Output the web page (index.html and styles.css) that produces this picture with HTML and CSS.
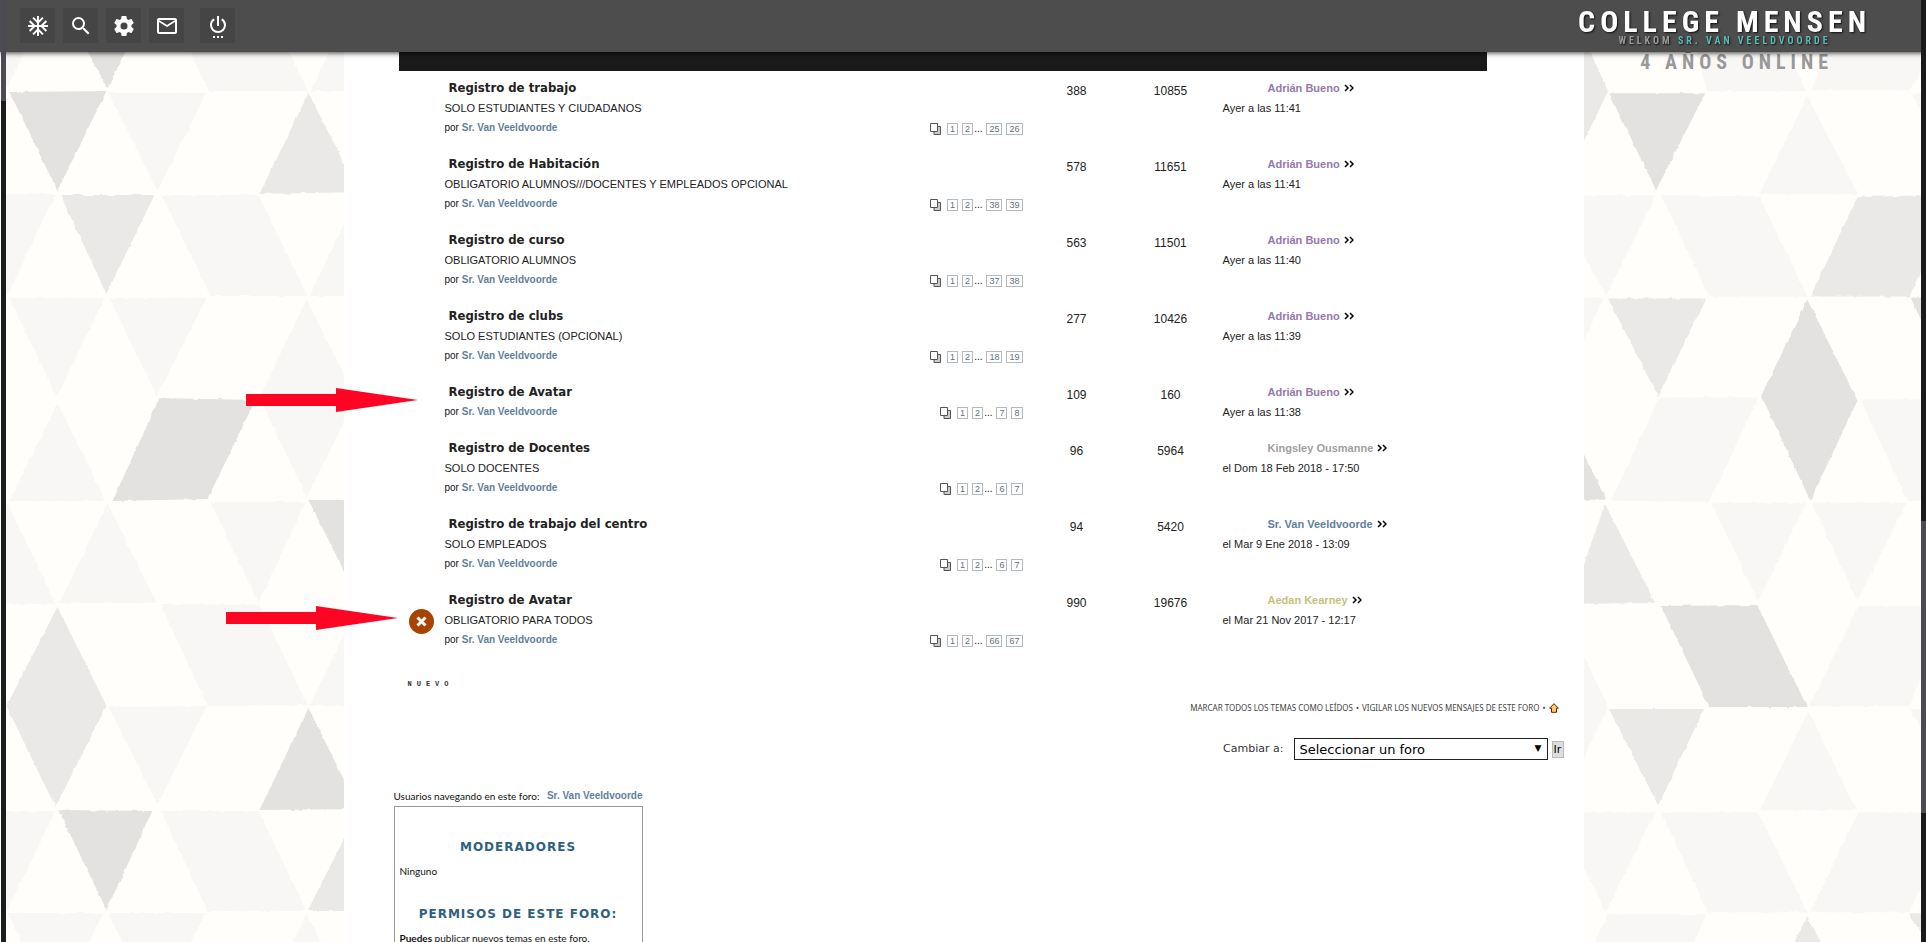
FILE: index.html
```html
<!DOCTYPE html>
<html lang="es">
<head>
<meta charset="utf-8">
<title>College Mensen</title>
<link rel="stylesheet" href="styles.css">
</head>
<body>
<header class="topbar">
  <nav class="tools" aria-label="Herramientas">
    <button class="tool" aria-label="Inicio"><svg viewBox="0 0 24 24"><path d="M22 11h-4.17l3.24-3.24-1.41-1.42L15 11h-2V9l4.66-4.66-1.42-1.41L13 6.17V2h-2v4.17L7.76 2.93 6.34 4.34 11 9v2H9L4.34 6.34 2.93 7.76 6.17 11H2v2h4.17l-3.24 3.24 1.41 1.42L9 13h2v2l-4.66 4.66 1.42 1.41L11 17.83V22h2v-4.17l3.24 3.24 1.42-1.41L13 15v-2h2l4.66 4.66 1.41-1.42L17.83 13H22z"/></svg></button>
    <button class="tool" aria-label="Buscar"><svg viewBox="0 0 24 24"><path d="M15.5 14h-.79l-.28-.27A6.47 6.47 0 0 0 16 9.500 6.500 6.500 0 1 0 9.500 16c1.610 0 3.090-.59 4.230-1.570l.27.28v.79l5 4.990L20.490 19l-4.990-5zm-6 0C7.010 14 5 11.990 5 9.500S7.010 5 9.500 5 14 7.010 14 9.500 11.990 14 9.500 14z"/></svg></button>
    <button class="tool" aria-label="Ajustes"><svg viewBox="0 0 24 24"><path d="M19.430 12.980c.04-.32.07-.64.07-.98s-.03-.66-.07-.98l2.110-1.650c.19-.15.24-.42.12-.64l-2-3.460c-.12-.22-.39-.3-.61-.22l-2.490 1c-.52-.4-1.080-.73-1.690-.98l-.38-2.650A.49.49 0 0 0 14 2h-4c-.25 0-.46.18-.49.42l-.38 2.650c-.61.25-1.170.59-1.690.98l-2.490-1c-.23-.09-.49 0-.61.22l-2 3.460c-.13.22-.07.49.12.64l2.110 1.650c-.04.32-.07.65-.07.98s.03.66.07.98l-2.110 1.650c-.19.15-.24.42-.12.64l2 3.460c.12.22.39.3.61.22l2.490-1c.52.4 1.080.73 1.690.98l.38 2.650c.03.24.24.42.49.42h4c.25 0 .46-.18.49-.42l.38-2.650c.61-.25 1.170-.59 1.690-.98l2.490 1c.23.09.49 0 .61-.22l2-3.460c.12-.22.07-.49-.12-.64l-2.110-1.650zM12 15.500a3.500 3.500 0 1 1 0-7 3.500 3.500 0 0 1 0 7z"/></svg></button>
    <button class="tool" aria-label="Mensajes"><svg viewBox="0 0 24 24"><path d="M20 4H4c-1.100 0-2 .9-2 2v12c0 1.100.9 2 2 2h16c1.100 0 2-.9 2-2V6c0-1.100-.9-2-2-2zm0 14H4V8l8 5 8-5v10zm-8-7L4 6h16l-8 5z"/></svg></button>
    <button class="tool tool-power" aria-label="Salir"><svg viewBox="0 0 24 24"><path d="M7 24h2v-2H7v2zm4 0h2v-2h-2v2zm2-22h-2v10h2V2zm3.560 2.440-1.450 1.450A5.970 5.970 0 0 1 18 11a6 6 0 1 1-9.120-5.120L7.440 4.440A7.960 7.960 0 0 0 4 11a8 8 0 1 0 16 0c0-2.720-1.360-5.120-3.440-6.560zM15 24h2v-2h-2v2z"/></svg></button>
  </nav>
  <div class="brand">
    <div class="brand-name">COLLEGE MENSEN</div>
    <div class="brand-sub">WELKOM <a href="#">SR. VAN VEELDVOORDE</a></div>
  </div>
</header>

<div class="shell">
  <div class="side">
    <svg class="tiles" viewBox="6 0 338 942" preserveAspectRatio="xMaxYMin slice" aria-hidden="true">
      <defs><filter id="paper" x="-5%" y="-5%" width="110%" height="110%"><feTurbulence type="fractalNoise" baseFrequency="0.12" numOctaves="3" seed="4"/><feDisplacementMap in="SourceGraphic" scale="3" xChannelSelector="R" yChannelSelector="G"/></filter></defs>
      <g filter="url(#paper)">
        <g class="light"><path d="M0 40H31L6 91H0zM185 40H284L308 91H209zM335 40H400V91H311zM109 93H207L158 191zM0 194H56L8 295L0 290zM162 195H259L308 296H211zM358 196L310 296H400zM10 298H105L57 397zM110 298H207L157 396zM307 299L356 398L307 497L260 398zM58 403L106 501H10zM8 503L56 604H0V510zM108 503L157 603H60zM211 502H306L259 603zM161 604L260 605L308 705L208 706zM358 606L310 706H400zM109 707L207 706L158 805zM0 811H56L8 910L0 905zM161 811H259L307 911H208zM8 913H104L56 1010zM108 913H206L158 1010zM307 914L356 1010H260z"/></g>
        <g class="mid"><path d="M309 93L260 194L359 192zM61 195H155L107 294zM58 607L107 706L56 807L7 706zM358 812L308 911H400z"/></g>
        <g class="dark"><path d="M82 40H132L108 88zM10 92L107 91L58 191zM160 398L256 400L208 499L113 501zM309 500H400L359 600zM309 708L359 809L260 810zM59 810L153 811L107 910z"/></g>
      </g>
    </svg>
  </div>

  <main class="page">
    <div class="forum">
      <div class="forum-bar"></div>
      <table class="topics">
        <colgroup><col class="c-icon"><col><col class="c-num"><col class="c-num"><col class="c-last"></colgroup>
        <tbody>
        <tr><td class="state"></td><td class="topic"><a class="title" href="#">Registro de trabajo</a><p class="desc">SOLO ESTUDIANTES Y CIUDADANOS</p><div class="meta"><span>por <a class="author" href="#">Sr. Van Veeldvoorde</a></span><span class="pages"><svg class="copy" viewBox="0 0 11 12"><path class="back" d="M4 3.500H10.500V11.500H4z"/><path class="front" d="M.5.500H7.500V8.500H.5z"/></svg><a href="#">1</a><a href="#">2</a><i>...</i><a href="#">25</a><a href="#">26</a></span></div></td><td class="num">388</td><td class="num">10855</td><td class="last"><a class="who violet" href="#">Adrián Bueno</a><svg class="go" viewBox="0 0 10 8"><path d="M1 1l3 3-3 3M6 1l3 3-3 3"/></svg><p>Ayer a las 11:41</p></td></tr>
        <tr><td class="state"></td><td class="topic"><a class="title" href="#">Registro de Habitación</a><p class="desc">OBLIGATORIO ALUMNOS///DOCENTES Y EMPLEADOS OPCIONAL</p><div class="meta"><span>por <a class="author" href="#">Sr. Van Veeldvoorde</a></span><span class="pages"><svg class="copy" viewBox="0 0 11 12"><path class="back" d="M4 3.500H10.500V11.500H4z"/><path class="front" d="M.5.500H7.500V8.500H.5z"/></svg><a href="#">1</a><a href="#">2</a><i>...</i><a href="#">38</a><a href="#">39</a></span></div></td><td class="num">578</td><td class="num">11651</td><td class="last"><a class="who violet" href="#">Adrián Bueno</a><svg class="go" viewBox="0 0 10 8"><path d="M1 1l3 3-3 3M6 1l3 3-3 3"/></svg><p>Ayer a las 11:41</p></td></tr>
        <tr><td class="state"></td><td class="topic"><a class="title" href="#">Registro de curso</a><p class="desc">OBLIGATORIO ALUMNOS</p><div class="meta"><span>por <a class="author" href="#">Sr. Van Veeldvoorde</a></span><span class="pages"><svg class="copy" viewBox="0 0 11 12"><path class="back" d="M4 3.500H10.500V11.500H4z"/><path class="front" d="M.5.500H7.500V8.500H.5z"/></svg><a href="#">1</a><a href="#">2</a><i>...</i><a href="#">37</a><a href="#">38</a></span></div></td><td class="num">563</td><td class="num">11501</td><td class="last"><a class="who violet" href="#">Adrián Bueno</a><svg class="go" viewBox="0 0 10 8"><path d="M1 1l3 3-3 3M6 1l3 3-3 3"/></svg><p>Ayer a las 11:40</p></td></tr>
        <tr><td class="state"></td><td class="topic"><a class="title" href="#">Registro de clubs</a><p class="desc">SOLO ESTUDIANTES (OPCIONAL)</p><div class="meta"><span>por <a class="author" href="#">Sr. Van Veeldvoorde</a></span><span class="pages"><svg class="copy" viewBox="0 0 11 12"><path class="back" d="M4 3.500H10.500V11.500H4z"/><path class="front" d="M.5.500H7.500V8.500H.5z"/></svg><a href="#">1</a><a href="#">2</a><i>...</i><a href="#">18</a><a href="#">19</a></span></div></td><td class="num">277</td><td class="num">10426</td><td class="last"><a class="who violet" href="#">Adrián Bueno</a><svg class="go" viewBox="0 0 10 8"><path d="M1 1l3 3-3 3M6 1l3 3-3 3"/></svg><p>Ayer a las 11:39</p></td></tr>
        <tr><td class="state"></td><td class="topic"><a class="title" href="#">Registro de Avatar</a><div class="meta"><span>por <a class="author" href="#">Sr. Van Veeldvoorde</a></span><span class="pages"><svg class="copy" viewBox="0 0 11 12"><path class="back" d="M4 3.500H10.500V11.500H4z"/><path class="front" d="M.5.500H7.500V8.500H.5z"/></svg><a href="#">1</a><a href="#">2</a><i>...</i><a href="#">7</a><a href="#">8</a></span></div></td><td class="num">109</td><td class="num">160</td><td class="last"><a class="who violet" href="#">Adrián Bueno</a><svg class="go" viewBox="0 0 10 8"><path d="M1 1l3 3-3 3M6 1l3 3-3 3"/></svg><p>Ayer a las 11:38</p></td></tr>
        <tr><td class="state"></td><td class="topic"><a class="title" href="#">Registro de Docentes</a><p class="desc">SOLO DOCENTES</p><div class="meta"><span>por <a class="author" href="#">Sr. Van Veeldvoorde</a></span><span class="pages"><svg class="copy" viewBox="0 0 11 12"><path class="back" d="M4 3.500H10.500V11.500H4z"/><path class="front" d="M.5.500H7.500V8.500H.5z"/></svg><a href="#">1</a><a href="#">2</a><i>...</i><a href="#">6</a><a href="#">7</a></span></div></td><td class="num">96</td><td class="num">5964</td><td class="last"><a class="who silver" href="#">Kingsley Ousmanne</a><svg class="go" viewBox="0 0 10 8"><path d="M1 1l3 3-3 3M6 1l3 3-3 3"/></svg><p>el Dom 18 Feb 2018 - 17:50</p></td></tr>
        <tr><td class="state"></td><td class="topic"><a class="title" href="#">Registro de trabajo del centro</a><p class="desc">SOLO EMPLEADOS</p><div class="meta"><span>por <a class="author" href="#">Sr. Van Veeldvoorde</a></span><span class="pages"><svg class="copy" viewBox="0 0 11 12"><path class="back" d="M4 3.500H10.500V11.500H4z"/><path class="front" d="M.5.500H7.500V8.500H.5z"/></svg><a href="#">1</a><a href="#">2</a><i>...</i><a href="#">6</a><a href="#">7</a></span></div></td><td class="num">94</td><td class="num">5420</td><td class="last"><a class="who author" href="#">Sr. Van Veeldvoorde</a><svg class="go" viewBox="0 0 10 8"><path d="M1 1l3 3-3 3M6 1l3 3-3 3"/></svg><p>el Mar 9 Ene 2018 - 13:09</p></td></tr>
        <tr><td class="state"><svg class="closed" viewBox="0 0 25 25"><circle cx="12.500" cy="12.500" r="12.500"/><path d="M8.500 8.500l8 8M16.500 8.500l-8 8"/></svg></td><td class="topic"><a class="title" href="#">Registro de Avatar</a><p class="desc">OBLIGATORIO PARA TODOS</p><div class="meta"><span>por <a class="author" href="#">Sr. Van Veeldvoorde</a></span><span class="pages"><svg class="copy" viewBox="0 0 11 12"><path class="back" d="M4 3.500H10.500V11.500H4z"/><path class="front" d="M.5.500H7.500V8.500H.5z"/></svg><a href="#">1</a><a href="#">2</a><i>...</i><a href="#">66</a><a href="#">67</a></span></div></td><td class="num">990</td><td class="num">19676</td><td class="last"><a class="who olive" href="#">Aedan Kearney</a><svg class="go" viewBox="0 0 10 8"><path d="M1 1l3 3-3 3M6 1l3 3-3 3"/></svg><p>el Mar 21 Nov 2017 - 12:17</p></td></tr>
        </tbody>
      </table>
      <a class="new-topic" href="#">NUEVO</a>
    </div>

    <div class="actions">
      <a href="#">MARCAR TODOS LOS TEMAS COMO LEÍDOS</a> • <a href="#">VIGILAR LOS NUEVOS MENSAJES DE ESTE FORO</a> •
      <a class="up" href="#" aria-label="Subir"><svg viewBox="0 0 10 10"><path d="M5 .7L9.400 5.200H7.500V9.300H2.500V5.200H.6z"/></svg></a>
    </div>
    <form class="jump">
      <label for="forum">Cambiar a:</label>
      <span class="select-wrap"><select id="forum"><option>Seleccionar un foro</option></select></span>
      <button type="button">Ir</button>
    </form>

    <section class="info">
      <p class="browsing"><span>Usuarios navegando en este foro:</span> <a class="author" href="#">Sr. Van Veeldvoorde</a></p>
      <div class="box">
        <h2>MODERADORES</h2>
        <p>Ninguno</p>
        <h2>PERMISOS DE ESTE FORO:</h2>
        <p><b>Puedes</b> publicar nuevos temas en este foro.</p>
      </div>
    </section>
    <svg class="pointer pointer-a" viewBox="0 0 172 24" aria-hidden="true"><path d="M0 6H90V0L172 12L90 24V18H0z"/></svg>
    <svg class="pointer pointer-b" viewBox="0 0 172 24" aria-hidden="true"><path d="M0 6H90V0L172 12L90 24V18H0z"/></svg>
  </main>

  <div class="side side-right">
    <svg class="tiles" viewBox="1584 0 337 942" preserveAspectRatio="xMinYMin slice" aria-hidden="true">
      <g filter="url(#paper)">
        <g class="light"><path d="M1694 40H1783L1806 91H1707zM1832 40H1940L1909 90H1811zM1807 96L1858 194H1759zM1911 93H1940V150zM1570 195H1656L1606 295L1570 230zM1661 195L1759 196L1807 296H1709zM1570 297H1604L1570 370zM1659 397H1758L1709 501L1611 500zM1860 399H1940V500H1907zM1711 502H1806L1758 600zM1811 502H1906L1857 600zM1570 625L1608 706L1570 785zM1858 605H1950L1909 705H1809zM1808 710L1856 809H1760zM1909 708H1940V760zM1570 811H1655L1606 910L1570 840zM1661 811H1758L1807 911H1708zM1858 811H1955L1909 911H1810zM1608 913H1706L1690 950H1590z"/></g>
        <g class="mid"><path d="M1570 40H1585L1608 91L1570 170zM1857 197L1954 194L1909 296H1810zM1608 298H1706L1658 396zM1605 503L1655 602L1570 603zM1609 708H1704L1658 804zM1807 915L1825 950H1789zM1908 912H1940V960z"/></g>
        <g class="dark"><path d="M1609 93H1705L1656 190zM1807 299L1857 400L1810 500L1761 395zM1910 297H1940V360zM1570 425L1606 499H1570zM1661 605L1757 604L1807 706H1709z"/></g>
      </g>
    </svg>
    <div class="online">4 AÑOS ONLINE</div>
  </div>
</div>
<div class="rail rail-left"></div>
<div class="rail rail-right"></div>
</body>
</html>
```
FILE: styles.css
```css
* { box-sizing: border-box; }
body { margin: 0; background: #fffefb; color: #111; font: 11px/20px "Liberation Sans", Arial, sans-serif; }
a { color: inherit; text-decoration: none; }
p, h2 { margin: 0; }
button { padding: 0; border: 0; cursor: pointer; }

.topbar { position: fixed; inset: 0 0 auto 0; z-index: 3; height: 52px; padding: 8px 55px 0 20px; display: flex; justify-content: space-between; align-items: flex-start; background: #4d4d4d; box-shadow: 0 1px 5px rgba(0, 0, 0, .75); }
.tools { display: flex; gap: 8px; }
.tool { width: 35px; height: 35px; display: grid; place-items: center; background: #454545; }
.tool svg { width: 24px; height: 24px; fill: #fff; }
.tool-power { margin-left: 8px; }
.brand { display: flex; flex-direction: column; align-items: center; font-family: "Roboto Condensed", "Open Sans Condensed", Roboto, sans-serif; font-weight: bold; text-shadow: 1px 1px 2px #111; }
.brand-name { font-size: 30px; line-height: 28px; letter-spacing: 5px; color: #fff; }
.brand-sub { font-size: 10px; line-height: 10px; letter-spacing: 3px; color: #999; }
.brand-sub a { color: #5cb8b2; }

.shell { height: 100vh; padding: 0 5px 0 6px; display: grid; grid-template: 100% / 1fr minmax(0, 1240px) 1fr; overflow: hidden; }
.side { position: relative; overflow: hidden; }
.tiles { position: absolute; inset: 0; width: 100%; height: 100%; }
.light { fill: #f8f7f5; }
.mid { fill: #eae9e7; }
.dark { fill: #e4e2e0; }
.side-right { display: flex; justify-content: flex-end; align-items: flex-start; padding: 50px 88px 0 0; }
.online { position: relative; font: bold 20px/24px "Roboto Condensed", "Open Sans Condensed", Roboto, sans-serif; letter-spacing: 5px; color: #999; white-space: nowrap; }

.page { position: relative; padding: 52px 20px 0 50px; background: #fff; }
.forum { padding: 0 77px 0 5px; }
.forum-bar { height: 19px; background: #1a1a1a; }
.topics { width: 100%; border-collapse: collapse; table-layout: fixed; }
.c-icon { width: 46px; }
.c-num { width: 94px; }
.c-last { width: 269px; }
.topics td { padding: 7px 0 9px; vertical-align: top; }
.topics .state { padding: 0; vertical-align: middle; text-align: center; }
.closed { display: block; width: 25px; height: 25px; margin-left: 10px; fill: #a84300; }
.closed path { stroke: #fff; stroke-width: 3; }
.topics .topic { padding-right: 7px; }
.title { display: block; padding-left: 4px; font: bold 13px/20px "DejaVu Sans Condensed", "DejaVu Sans", sans-serif; color: #222; }
.desc { color: #222; }
.meta { display: flex; justify-content: space-between; height: 20px; font-size: 10px; }
.author { color: #5f7f9c; font-weight: bold; }
.pages { display: flex; align-items: center; gap: 4px; padding-top: 2px; }
.pages a { height: 12px; padding: 0 2px; border: 1px solid #b4bac0; font-size: 9px; line-height: 10px; color: #5f7080; }
.pages i { margin-left: -3px; font-style: normal; }
.copy { width: 11px; height: 12px; margin-right: 2px; stroke: #555; }
.back { fill: #ccc; }
.front { fill: #fff; }
.topics .num { padding-top: 10px; text-align: center; font-size: 12px; color: #222; }
.topics .last { padding-left: 5px; color: #222; }
.who { margin-left: 45px; font-weight: bold; }
.violet { color: #9678ae; }
.silver { color: #a0a0a0; }
.olive { color: #c5c27a; }
.go { width: 10px; height: 8px; margin-left: 4px; fill: none; stroke: #000; stroke-width: 1.5; }
.new-topic { display: block; margin-top: 15px; padding-left: 9px; font: bold 7px/20px "Liberation Mono", monospace; letter-spacing: 5px; color: #333; }

.actions { display: flex; justify-content: flex-end; align-items: center; gap: 3px; margin-top: 4px; padding-right: 5px; font: 8px/20px "Noto Sans", sans-serif; color: #444; }
.up { display: flex; }
.up svg { width: 10px; height: 10px; fill: #fc6; stroke: #6b1a00; }
.jump { display: flex; justify-content: flex-end; align-items: center; margin-top: 20px; font: 11px/20px "DejaVu Sans", sans-serif; color: #333; }
.select-wrap { position: relative; margin: 0 4px 0 10px; }
.select-wrap::after { content: "▼"; position: absolute; right: 6px; top: 0; font-size: 9px; color: #000; pointer-events: none; }
.jump select { display: block; width: 254px; height: 22px; padding: 0 5px; appearance: none; border: 1px solid #222; border-radius: 0; background: #fff; font: 13px "DejaVu Sans", sans-serif; color: #000; }
.jump button { height: 17px; width: 12px; border: 1px solid #bbb; background: #ddd; font: 11px/15px "DejaVu Sans", sans-serif; color: #000; }

.info { width: 249px; margin-top: 26px; font: 10px/20px Lato, sans-serif; white-space: nowrap; }
.browsing { display: flex; justify-content: space-between; }
.browsing .author { font-family: "Liberation Sans", sans-serif; }
.box { padding: 30px 5px; border: 1px solid #999; }
.box h2 { font: bold 12px/20px "DejaVu Sans", sans-serif; letter-spacing: 1px; text-align: center; color: #2e6080; }
.box p { padding: 4px 0; }
.box p + h2 { margin-top: 19px; }

.pointer { position: absolute; width: 172px; height: 24px; fill: #ff0524; }
.pointer-a { left: -98px; top: 388px; }
.pointer-b { left: -118px; top: 606px; }

.rail { position: fixed; top: 0; bottom: 0; width: 5px; z-index: 4; }
.rail-left { left: 1px; background: linear-gradient(#4b4a55 101px, #1a1d1c 101px); }
.rail-right { right: 0; background: linear-gradient(#1a1a1a 521px, #4b4a55 521px 813px, #1a1a1a 813px); }
```
